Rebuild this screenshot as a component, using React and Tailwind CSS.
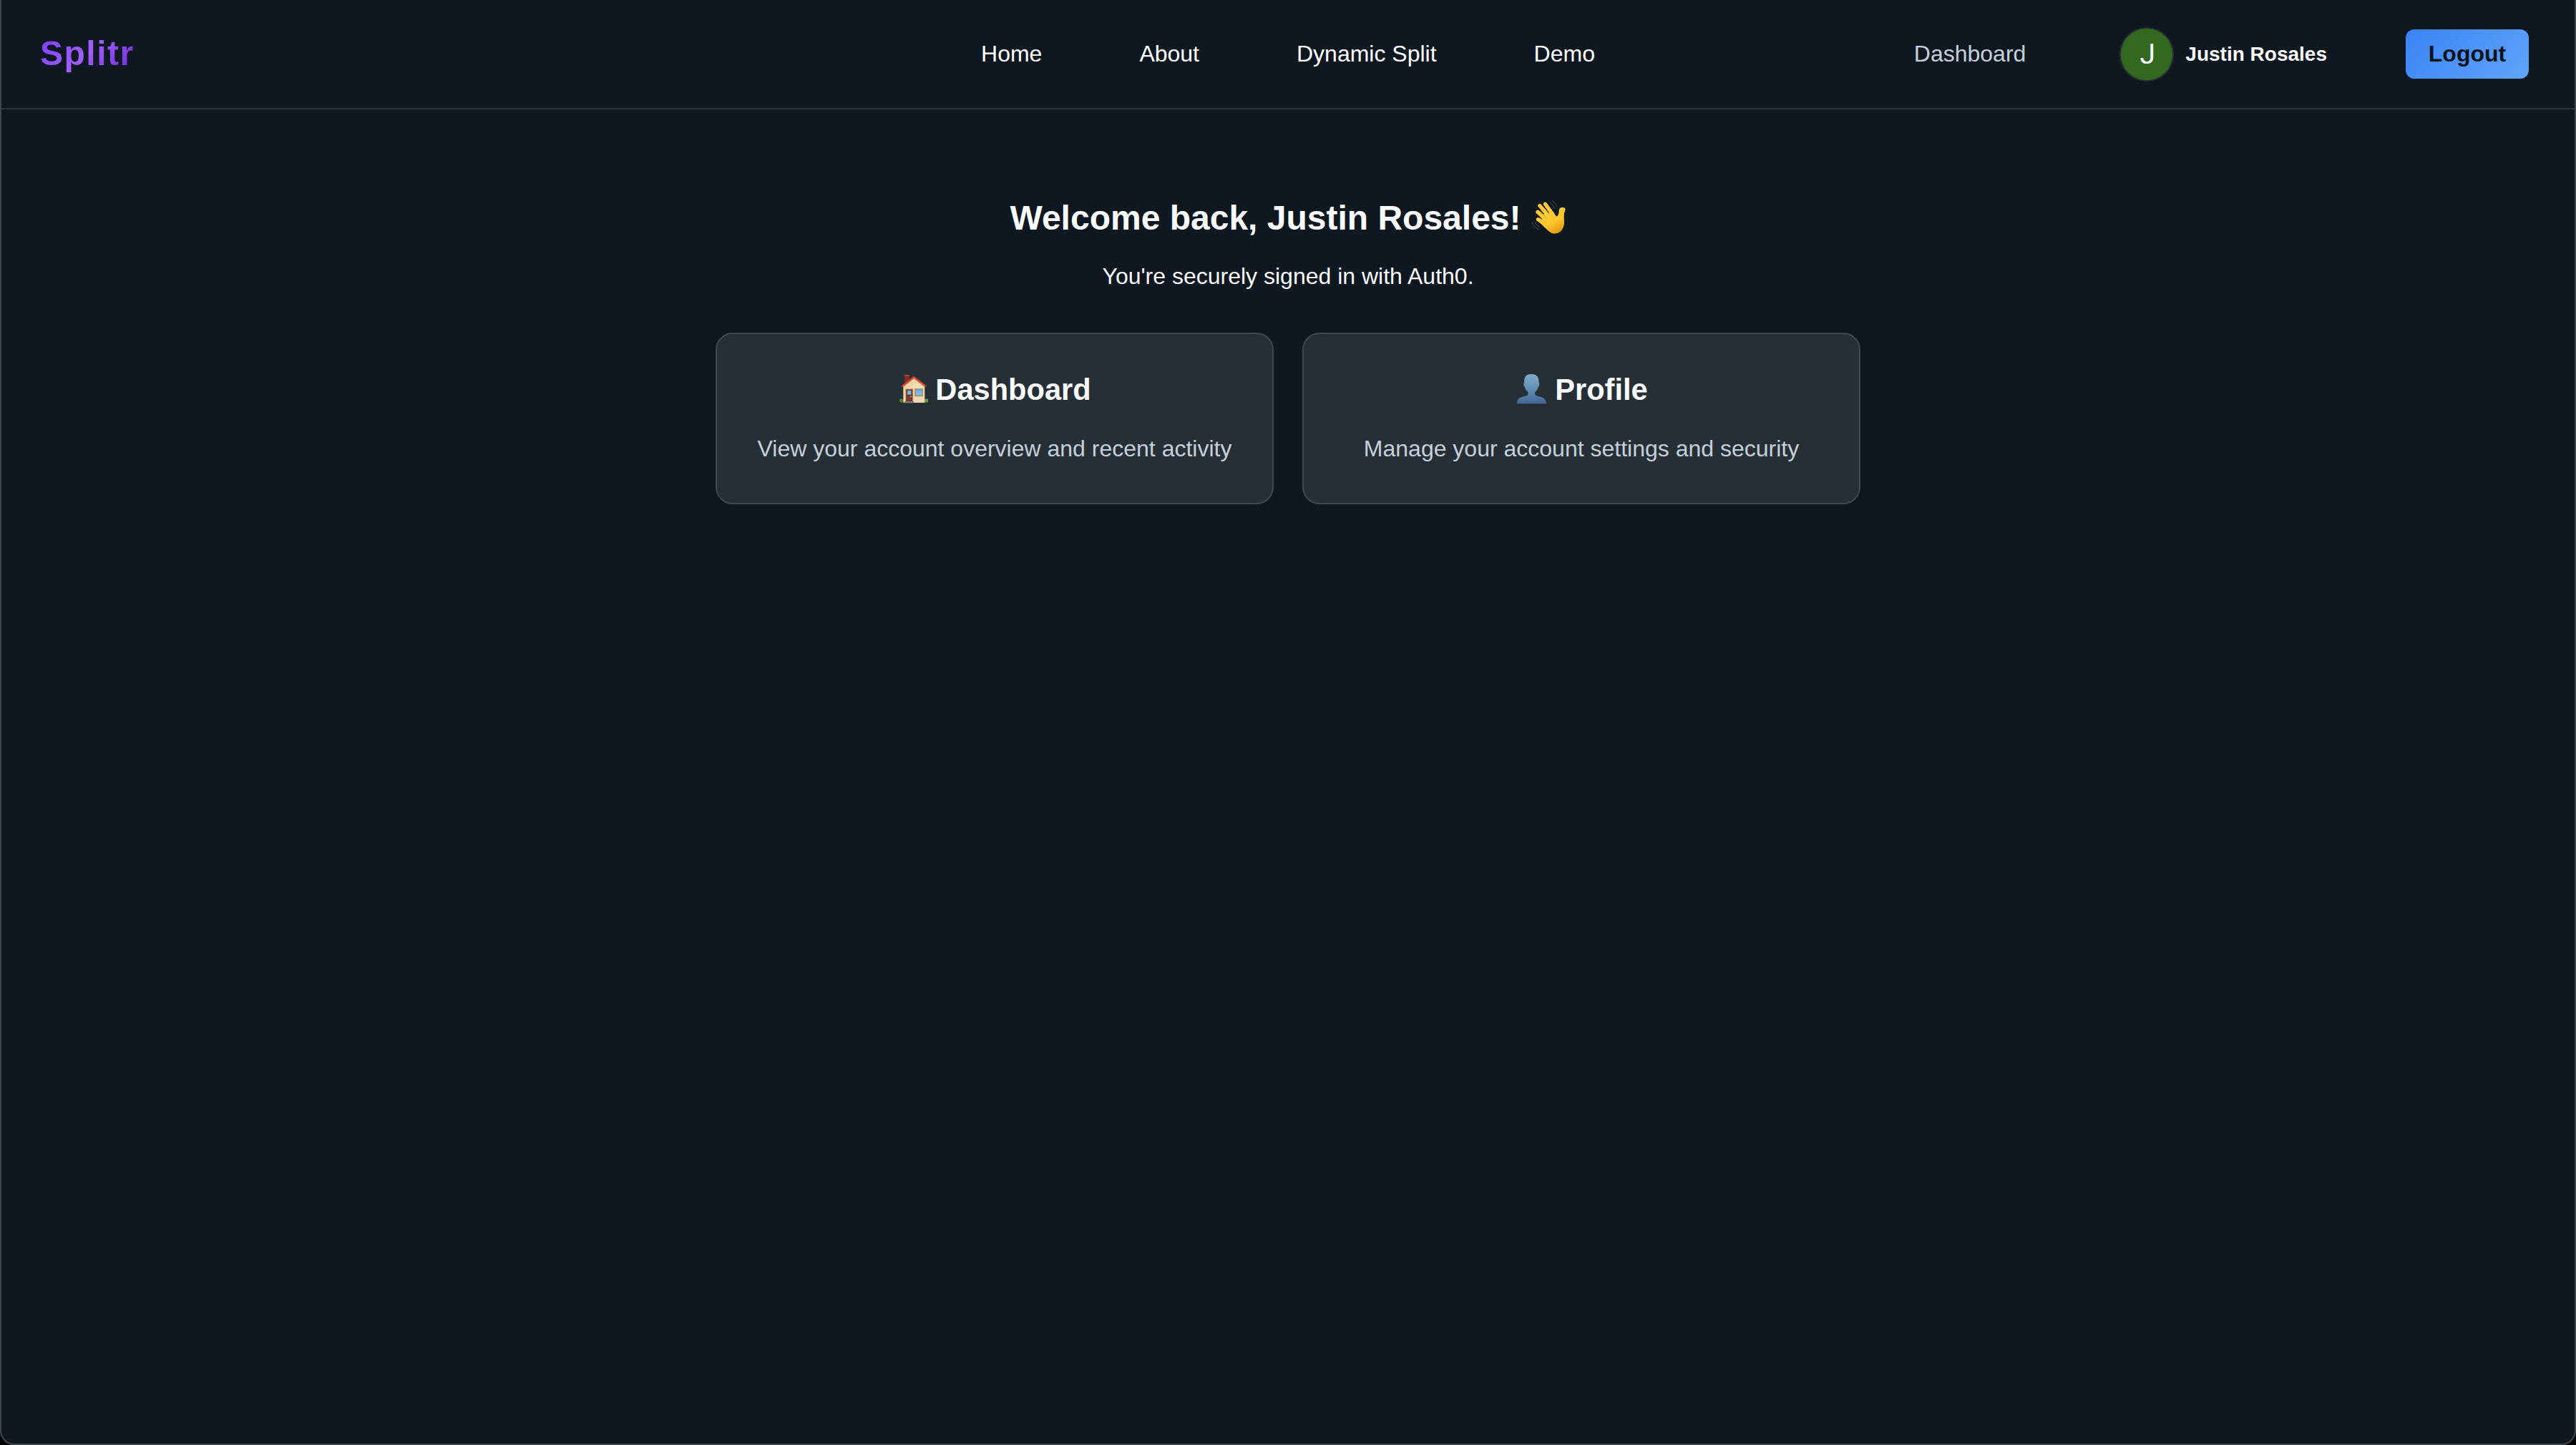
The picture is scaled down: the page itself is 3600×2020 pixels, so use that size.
import React from "react";

const links = ["Home", "About", "Dynamic Split", "Demo"];

function WaveIcon() {
  return (
    <svg viewBox="60 24 146 148" className="mb-1 h-[49px] w-[49px] shrink-0">
      <defs>
        <linearGradient id="wave" x1="0" y1="0" x2="0.6" y2="1">
          <stop offset="0" stopColor="#ffcf40" />
          <stop offset="0.65" stopColor="#fdc72f" />
          <stop offset="1" stopColor="#e89a12" />
        </linearGradient>
      </defs>
      <g fill="none" stroke="#4b4e53" strokeWidth="3" strokeLinecap="round">
        <path d="M148 29 Q164 38 167 54" />
        <path d="M139 37 Q153 45 157 61" />
        <path d="M72 117 Q78 133 95 139" />
        <path d="M62 122 Q70 142 89 149" />
      </g>
      <g stroke="#ffca35" strokeWidth="16" strokeLinecap="round" fill="none">
        <path d="M95 50 L132 94" />
        <path d="M118 43 L152 90" />
        <path d="M86 76 L124 112" />
        <path d="M88 108 L124 132" />
      </g>
      <path
        d="M112 85 L146 77 C152 82 158 91 167 95 C174 90 176 81 176 70 C176 61 182 56 192 57 C203 58 205 65 201 72 C195 84 198 98 198 121 C198 148 181 168 157 168 C142 168 130 156 116 142 L96 122 Z"
        fill="url(#wave)"
      />
      <g fill="none" stroke="#dc9a18" strokeWidth="2" strokeLinecap="round">
        <path d="M112 57 L137 87" />
        <path d="M99 74 L124 103" />
        <path d="M97 102 L121 123" />
        <path d="M162 93 Q151 103 153 116" stroke="#edaa20" />
      </g>
    </svg>
  );
}

function HouseIcon() {
  return (
    <svg viewBox="48 38 122 122" className="mb-1 -mr-0.5 h-[41px] w-[41px] shrink-0">
      <defs>
        <linearGradient id="wall" x1="0" y1="0" x2="1" y2="1">
          <stop offset="0" stopColor="#e9c996" />
          <stop offset="0.5" stopColor="#f5ddb3" />
          <stop offset="1" stopColor="#ead5b0" />
        </linearGradient>
        <linearGradient id="glass" x1="0" y1="0" x2="0" y2="1">
          <stop offset="0" stopColor="#6baade" />
          <stop offset="1" stopColor="#7fc2f2" />
        </linearGradient>
      </defs>
      <path d="M69 43 H89 V62 L69 78 Z" fill="#842d26" />
      <path d="M68 41 H90 V46 H68 Z" fill="#b0443a" />
      <circle cx="56" cy="148" r="8" fill="#53822e" />
      <circle cx="160" cy="148" r="8" fill="#669b38" />
      <path d="M64 86 L108 50 L153 86 V157 H64 Z" fill="url(#wall)" />
      <path d="M64 86 L108 50 L153 86 L153 92 L108 58 L64 92 Z" fill="#b78e62" />
      <path
        d="M59 88 L108 49 L158 88"
        fill="none"
        stroke="#d93831"
        strokeWidth="6"
        strokeLinejoin="round"
        strokeLinecap="round"
      />
      <rect x="73" y="99" width="32" height="53" fill="#b58c5d" />
      <rect x="76" y="102" width="26" height="50" fill="#6a3222" />
      <rect x="81" y="106" width="16" height="17" fill="url(#glass)" />
      <rect x="81" y="129" width="16" height="19" fill="#7e402d" />
      <circle cx="96" cy="132" r="3" fill="#e5a345" />
      <rect x="111" y="98" width="35" height="33" fill="#a78b69" />
      <rect x="116" y="102" width="26" height="23" fill="url(#glass)" />
      <rect x="69" y="151" width="39" height="7" fill="#817d78" />
    </svg>
  );
}

function PersonIcon() {
  return (
    <svg viewBox="57 33 128 129" className="mb-1 h-[43px] w-[43px] shrink-0">
      <defs>
        <linearGradient id="bust" x1="0" y1="0" x2="0" y2="1">
          <stop offset="0" stopColor="#82abc9" />
          <stop offset="0.5" stopColor="#638fb4" />
          <stop offset="1" stopColor="#416792" />
        </linearGradient>
      </defs>
      <path
        d="M120 36 C139 36 151 45 151 66 C151 71 155 73 153 80 C152 88 150 88 148 91 C145 102 141 107 135 112 V119 C135 135 182 121 182 160 H59 C59 121 106 135 106 119 V112 C100 107 95 102 93 91 C90 88 88 86 88 79 C87 73 90 72 90 66 C90 45 101 36 120 36 Z"
        fill="url(#bust)"
      />
    </svg>
  );
}

function Card({ icon, title, text }) {
  return (
    <div className="h-[240px] w-[780px] rounded-3xl border-2 border-[#414750] bg-[#272f36] pt-12 text-center">
      <h3 className="flex h-[60px] items-center justify-center gap-[11px] pl-0.5 text-[41.6px] font-bold leading-[60px] text-gray-50">
        {icon}
        <span>{title}</span>
      </h3>
      <p className="mt-[26px] text-[32px] leading-[52px] text-[#c5d0da]">{text}</p>
    </div>
  );
}

function App() {
  return (
    <div className="bg-black">
      <div className="h-[2020px] w-[3600px] rounded-b-[20px] border-x-2 border-b-2 border-[#40454e] bg-[#0f1720] font-['Liberation_Sans',Arial,sans-serif] text-[32px] text-white">
        <header className="grid h-[153px] grid-cols-[1fr_auto_1fr] items-center border-b-2 border-[#2d333c]">
          <div className="pl-[54px] pt-1">
            <span className="bg-[linear-gradient(135deg,#7c3aff_0%,#a060f8_48%,#6d28d9_100%)] bg-clip-text text-5xl font-bold tracking-[1.5px] text-transparent">
              Splitr
            </span>
          </div>

          <nav className="flex gap-[136px] pb-0.5">
            {links.map((item) => (
              <a key={item} href="#">
                {item}
              </a>
            ))}
          </nav>

          <div className="flex items-center justify-end pr-16">
            <a href="#" className="mr-[131px] pb-0.5 text-[#c5d0da]">
              Dashboard
            </a>
            <div className="mr-[110px] flex items-center gap-4">
              <div className="flex h-[76px] w-[76px] items-center justify-center rounded-full border-2 border-[#28303a] bg-[#33691e] pt-0.5 pl-0.5 font-[Roboto,sans-serif] text-[39px]">
                J
              </div>
              <span className="text-[28px] font-bold text-gray-50">Justin Rosales</span>
            </div>
            <button className="h-[69px] w-[172px] rounded-xl bg-linear-135 from-[#3b82f6] to-[#60a5fa] pb-0.5 font-bold text-[#0b131c]">
              Logout
            </button>
          </div>
        </header>

        <main className="flex flex-col items-center pt-[120px]">
          <h1 className="flex h-16 items-center gap-[14px] text-5xl font-bold leading-[64px] text-gray-50">
            <span>Welcome back, Justin Rosales!</span>
            <WaveIcon />
          </h1>
          <p className="mt-[23px] leading-[52px] text-gray-50">You're securely signed in with Auth0.</p>

          <div className="mt-[53px] flex gap-10">
            <Card
              icon={<HouseIcon />}
              title="Dashboard"
              text="View your account overview and recent activity"
            />
            <Card
              icon={<PersonIcon />}
              title="Profile"
              text="Manage your account settings and security"
            />
          </div>
        </main>
      </div>
    </div>
  );
}

export default App;
